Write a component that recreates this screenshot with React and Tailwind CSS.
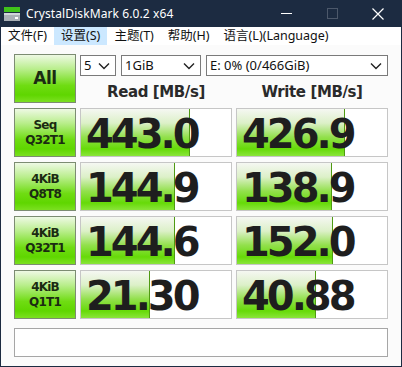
import React from 'react';

const rows = [
  { label: ['Seq', 'Q32T1'], read: '443.0', write: '426.9', readFill: 109, writeFill: 108 },
  { label: ['4KiB', 'Q8T8'], read: '144.9', write: '138.9', readFill: 94, writeFill: 95 },
  { label: ['4KiB', 'Q32T1'], read: '144.6', write: '152.0', readFill: 94, writeFill: 96 },
  { label: ['4KiB', 'Q1T1'], read: '21.30', write: '40.88', readFill: 69, writeFill: 79 },
];

const greenBtn =
  'bg-[linear-gradient(to_bottom,#eef9e4_0%,#b9ee8c_30%,#6fdc12_65%,#5fd600_85%,#7be020_100%)] border border-[#7c8c72]';

const Chevron = () => (
  <svg width="12" height="8" viewBox="0 0 12 8" className="shrink-0">
    <path d="M1 1.5 L6 6.5 L11 1.5" fill="none" stroke="#222" strokeWidth="1.4" />
  </svg>
);

const Select = ({ value, className }) => (
  <div
    className={`h-[21px] flex items-center justify-between bg-white border border-[#7a7a7a] pl-[3px] pr-[5px] text-[13px] text-[#111] ${className}`}
  >
    <span className="leading-none">{value}</span>
    <Chevron />
  </div>
);

const Label = ({ lines }) => (
  <div
    className={`${greenBtn} flex flex-col items-center justify-center text-[12px] leading-[15px] font-bold text-[#1b2b12] tracking-[-0.8px]`}
    style={{ fontFamily: '"DejaVu Sans", sans-serif' }}
  >
    <span>{lines[0]}</span>
    <span>{lines[1]}</span>
  </div>
);

const Value = ({ text, fill }) => (
  <div className="relative bg-white border border-[#c6c6c6] overflow-hidden flex items-center">
    <div
      className="absolute left-0 top-0 bottom-0 border-r border-[#4f9a12] bg-[linear-gradient(to_bottom,#f5f7f2_0%,#dcf0c8_30%,#92e04c_60%,#66da08_85%,#8ae53a_100%)]"
      style={{ width: fill }}
    />
    <span
      className="relative pl-[5px] pt-[2px] text-[40px] leading-none font-bold text-[#1e1e1e] tracking-[-3px]"
      style={{ fontFamily: '"DejaVu Sans", sans-serif' }}
    >
      {text}
    </span>
  </div>
);

const App = () => {
  return (
    <div
      className="w-[402px] h-[367px] bg-[#1c2b41] px-[1px] pb-[1px] flex flex-col overflow-hidden"
      style={{ fontFamily: '"Noto Sans", "Noto Sans CJK SC", sans-serif' }}
    >
      {/* title bar */}
      <div className="h-[27px] flex items-center text-white shrink-0">
        <svg width="16" height="16" viewBox="0 0 16 16" className="ml-[3px] mr-[6px]">
          <rect x="0" y="1" width="16" height="5" fill="#3fc21a" />
          <rect x="0" y="7" width="16" height="8" fill="#a9b0b6" />
          <rect x="0" y="7" width="16" height="2" fill="#d0d5d9" />
          <rect x="11" y="11" width="3" height="2" fill="#ffffff" />
        </svg>
        <span className="text-[12px] leading-none tracking-[0.1px]">CrystalDiskMark 6.0.2 x64</span>
        <div className="ml-auto flex items-center h-full">
          <div className="w-[46px] h-full flex items-center justify-center">
            <div className="w-[11px] h-[1px] bg-white" />
          </div>
          <div className="w-[46px] h-full flex items-center justify-center">
            <div className="w-[11px] h-[11px] border border-[#4c586a]" />
          </div>
          <div className="w-[46px] h-full flex items-center justify-center">
            <svg width="12" height="12" viewBox="0 0 12 12">
              <path d="M0.5 0.5 L11.5 11.5 M11.5 0.5 L0.5 11.5" stroke="#fff" strokeWidth="1.2" />
            </svg>
          </div>
        </div>
      </div>

      {/* menu bar */}
      <div className="h-[18px] bg-white flex items-stretch text-[12.5px] text-[#111] shrink-0">
        <div className="px-[7px] flex items-center">文件(F)</div>
        <div className="px-[7px] flex items-center bg-[#cce8ff]">设置(S)</div>
        <div className="px-[7px] flex items-center">主题(T)</div>
        <div className="px-[7px] flex items-center">帮助(H)</div>
        <div className="px-[7px] flex items-center">语言(L)(Language)</div>
      </div>

      {/* content */}
      <div className="flex-1 bg-[#fbfbfb] pl-[13px] pr-[13px] pt-[9px] flex flex-col">
        <div className="grid grid-cols-[62px_152px_152px] auto-rows-[49px] gap-x-[4px] gap-y-[5px]">
          <div
            className={`${greenBtn} flex items-center justify-center text-[17px] font-bold text-[#1b2b12] tracking-[-0.5px]`}
            style={{ fontFamily: '"DejaVu Sans", sans-serif' }}
          >
            All
          </div>
          <div className="col-span-2 flex flex-col">
            <div className="flex gap-[5px] mt-[1px]">
              <Select value="5" className="w-[36px]" />
              <Select value="1GiB" className="w-[80px]" />
              <Select value="E: 0% (0/466GiB)" className="flex-1" />
            </div>
            <div
              className="flex gap-[4px] mt-[5px] text-[15px] font-bold text-[#2a2a2a] tracking-[-0.4px]"
              style={{ fontFamily: '"DejaVu Sans", sans-serif' }}
            >
              <div className="w-[152px] text-center">Read [MB/s]</div>
              <div className="w-[152px] text-center">Write [MB/s]</div>
            </div>
          </div>

          {rows.map((r) => (
            <React.Fragment key={r.label.join('-')}>
              <Label lines={r.label} />
              <Value text={r.read} fill={r.readFill} />
              <Value text={r.write} fill={r.writeFill} />
            </React.Fragment>
          ))}
        </div>

        <div className="mt-[9px] h-[29px] bg-white border border-[#a6a6a6]" />
      </div>
    </div>
  );
};

export default App;
